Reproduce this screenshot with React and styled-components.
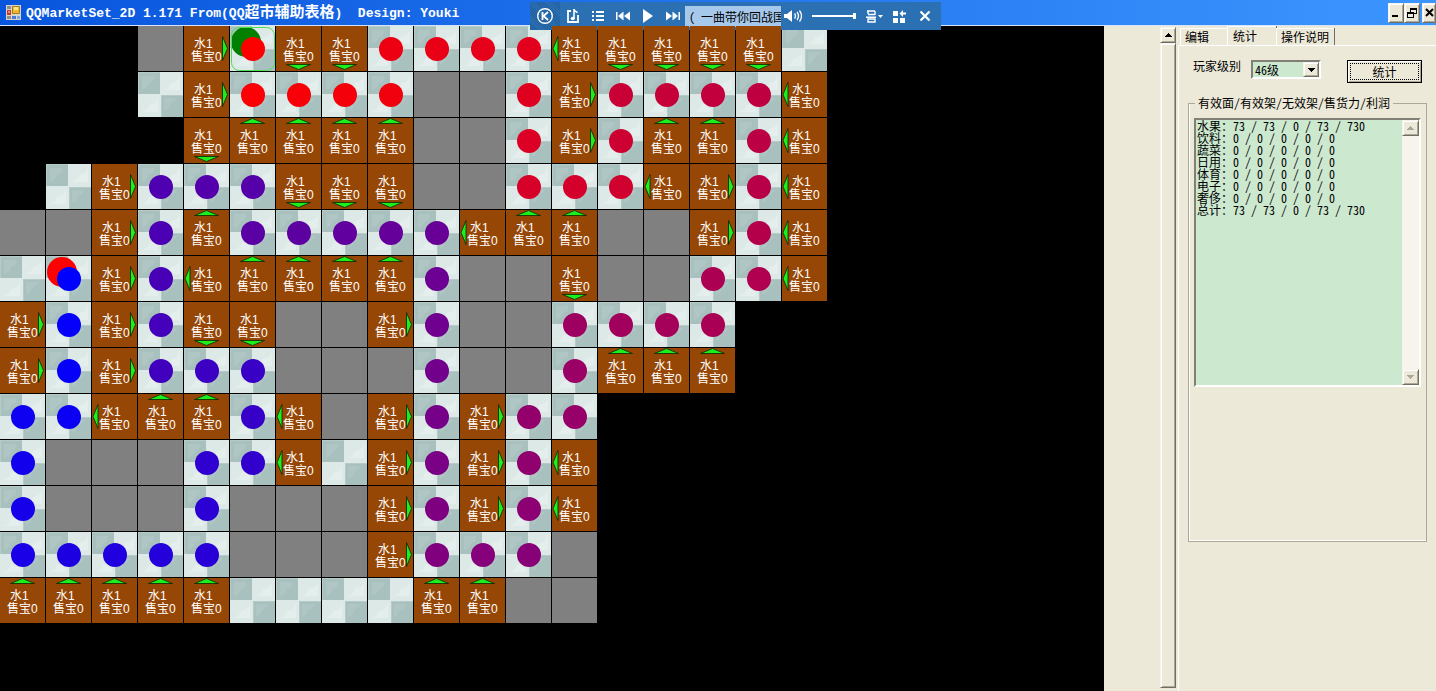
import { useState } from 'react';
import styled, { createGlobalStyle } from 'styled-components';

// One character per cell: . empty, g blocked, t floor, o path, s start, e end, L R U D shelf facing that side
const MAP = [
    '...gRsDDooooLDDDDt',
    '...tRooooggoRooooL',
    '....DUUUUggoRoUUoL',
    '.tRoooDDDggoooLRoL',
    'ggRoUoooooLUUggRoL',
    'teRoLUUUUoggDggooL',
    'RoRoDDggRoggoooo..',
    'RoRooogggoggoUUU..',
    'ooLUUoLgRoRoo.....',
    'ogggooLtRoRoL.....',
    'ogggogggRoRoL.....',
    'ooooogggRooog.....',
    'UUUUUttttUUgg.....',
];

// The walk from the entrance to the cash desk, as runs of steps
const ROUTE = 'D1 R3 U1 R3 D3 R2 U2 R3 D4 L1 D1 L3 D2 L1 D3 L2 U7 L4 U1 L2 D4 R2 D2 L1 D2 L4 U3 R1 U3';
const STEPS = { L: [-1, 0], R: [1, 0], U: [0, -1], D: [0, 1] };

function walkRoute() {
    const order = {};
    let x = 5;
    let y = 0;
    let n = 0;
    order[`${x},${y}`] = n;
    ROUTE.split(' ').forEach((run) => {
        const [dx, dy] = STEPS[run[0]];
        for (let i = 0; i < Number(run[1]); i++) {
            x += dx;
            y += dy;
            n += 1;
            order[`${x},${y}`] = n;
        }
    });
    return { order, last: n };
}

const { order, last } = walkRoute();

const dotColor = (x, y) => {
    const blue = Math.round((order[`${x},${y}`] / last) * 255);
    return `rgb(${255 - blue}, 0, ${blue})`;
};

const ARROWS = {
    R: '38.5,10.5 43.5,22.5 38.5,34.5',
    L: '6,10.5 1,22.5 6,34.5',
    U: '10.5,5.5 22.5,0.5 34.5,5.5',
    D: '10.5,38.5 22.5,43.5 34.5,38.5',
};

const ROWS = [
    ['水果', '73 / 73 / 0 / 73 / 730'],
    ['饮料', '0 / 0 / 0 / 0 / 0'],
    ['蔬菜', '0 / 0 / 0 / 0 / 0'],
    ['日用', '0 / 0 / 0 / 0 / 0'],
    ['体育', '0 / 0 / 0 / 0 / 0'],
    ['电子', '0 / 0 / 0 / 0 / 0'],
    ['奢侈', '0 / 0 / 0 / 0 / 0'],
    ['总计', '73 / 73 / 0 / 73 / 730'],
];

function FloorArt({ children }) {
    return (
        <TileArt viewBox="0 0 45 45" aria-hidden="true">
            <path d="M0 0h45v45H0z" fill="#dde9e7" />
            <path d="M0 0h22v22H0zM23 23h22v22H23z" fill="#a8c0be" />
            <path d="M0 0h22v1H1v21H0zM23 23h22v1H24v21h-1z" fill="#b6cac8" />
            <path d="M4 4h12q1 6-5 7-1 5-7 7zM26 26h13q-2 4-7 6-1 5-6 7z" fill="#b0c6c4" />
            <path d="M26 18q6-2 7-7 7-1 9-7v14zM4 40q6-2 7-7 7-1 9-7v14z" fill="#e4eeec" />
            {children}
        </TileArt>
    );
}

function Cell({ kind, x, y }) {
    if (kind === '.') return <Empty />;
    if (kind === 'g') return <Blocked />;
    if (kind === 't') return <FloorArt />;
    if (kind === 'o' || kind === 's' || kind === 'e') {
        return (
            <FloorArt>
                {kind === 's' && <circle cx="16" cy="16" r="15" fill="#008000" />}
                {kind === 'e' && <circle cx="16" cy="16" r="15" fill="#ff0000" />}
                <circle cx="23" cy="23" r="12" fill={dotColor(x, y)} />
                {kind === 's' && <rect x="1.5" y="1.5" width="43" height="43" rx="8" fill="none" stroke="#4fe052" />}
            </FloorArt>
        );
    }
    return (
        <Shelf>
            <ShelfText>水1</ShelfText>
            <ShelfText>售宝0</ShelfText>
            <ShelfArrow viewBox="0 0 45 45" aria-hidden="true">
                <polygon points={ARROWS[kind]} fill="#1cf01c" stroke="#0a2400" strokeWidth="0.8" strokeMiterlimit="10" />
            </ShelfArrow>
        </Shelf>
    );
}

function AppIcon() {
    return (
        <svg width="15" height="15" viewBox="0 0 15 15" aria-hidden="true">
            <path d="M0 0h15v15H0z" fill="#d9d5c8" />
            <path d="M1 1h4v3H1zM1 11h4v3H1z" fill="#8d8d95" />
            <path d="M1 5h4v5H1z" fill="#c4382c" />
            <path d="M2 6h2v2H2z" fill="#e88a78" />
            <path d="M6.5 1.5h7v7h-7z" fill="#f0b92c" stroke="#a87a20" />
            <path d="M8 2h4v3H8z" fill="#ffe58a" />
            <path d="M6 11h4v3H6z" fill="#4a78d8" />
            <path d="M11 11h3v3h-3z" fill="#7da4ea" />
        </svg>
    );
}

function Player() {
    return (
        <PlayerBar>
            <LogoButton aria-label="Player">
                <svg width="18" height="18" viewBox="0 0 18 18" fill="none" stroke="#fff">
                    <circle cx="9" cy="9" r="7.3" strokeWidth="1.4" />
                    <path d="M6.5 5v8M12 5L7.5 9l4.5 4" strokeWidth="1.8" />
                </svg>
            </LogoButton>
            <PlayerButton aria-label="Library">
                <svg width="14" height="16" viewBox="0 0 14 16" fill="none" stroke="#fff" strokeWidth="1.8">
                    <path d="M5 3H2v11h10V7" />
                    <path d="M8 11V1q0 2 3.5 3.5" strokeWidth="1.6" />
                    <ellipse cx="6.7" cy="10.5" rx="2" ry="1.7" fill="#fff" stroke="none" />
                </svg>
            </PlayerButton>
            <PlayerButton aria-label="Playlist">
                <svg width="14" height="12" viewBox="0 0 14 12" fill="#fff">
                    <path d="M1 1h2v2H1zM5 1h8v2H5zM1 5h2v2H1zM5 5h8v2H5zM1 9h2v2H1zM5 9h8v2H5z" />
                </svg>
            </PlayerButton>
            <PlayerButton aria-label="Previous">
                <svg width="16" height="10" viewBox="0 0 16 10" fill="#fff">
                    <path d="M1 1h1.5v8H1zM8.5 .5v9L3 5zM15 .5v9L9 5z" />
                </svg>
            </PlayerButton>
            <PlayerButton aria-label="Play">
                <svg width="12" height="16" viewBox="0 0 12 16" fill="#fff">
                    <path d="M1 1l10 7-10 7z" />
                </svg>
            </PlayerButton>
            <PlayerButton aria-label="Next">
                <svg width="16" height="10" viewBox="0 0 16 10" fill="#fff">
                    <path d="M13.5 1H15v8h-1.5zM1 .5v9L7 5zM7.5 .5v9L13 5z" />
                </svg>
            </PlayerButton>
            <Song>( 一曲带你回战国</Song>
            <PlayerButton aria-label="Mute">
                <svg width="19" height="14" viewBox="0 0 19 14" fill="none" stroke="#fff" strokeWidth="1.3">
                    <path d="M0 5h3l5-4v12L3 9H0z" fill="#fff" stroke="none" />
                    <path d="M10.5 4.5q2 2.5 0 5M13 3q3 4 0 8M15.5 1.5q4 5.5 0 11" />
                </svg>
            </PlayerButton>
            <Volume type="range" min="0" max="100" defaultValue="100" aria-label="Volume" />
            <PlayerButton aria-label="Lyrics">
                <svg width="18" height="13" viewBox="0 0 18 13" fill="none" stroke="#fff" strokeWidth="1.4">
                    <path d="M1 1h8M9 1v4M2 4.5h7M0 7.2h10M2 9h7v3H2zM2 1v3" />
                    <path d="M12 5h5l-2.5 3z" fill="#fff" stroke="none" />
                </svg>
            </PlayerButton>
            <PlayerButton aria-label="Mode">
                <svg width="14" height="13" viewBox="0 0 14 13" fill="#fff">
                    <path d="M0 1h5v5H0zM0 8h5v5H0zM7 8h5v5H7zM6.5 3.5L10 0v2.5h3v2h-3V7z" />
                </svg>
            </PlayerButton>
            <PlayerButton aria-label="Close player">
                <svg width="12" height="12" viewBox="0 0 12 12" stroke="#fff" strokeWidth="2.2">
                    <path d="M1.5 1.5l9 9M10.5 1.5l-9 9" />
                </svg>
            </PlayerButton>
        </PlayerBar>
    );
}

function Triangle({ up, color = '#000' }) {
    return (
        <svg width="7" height="4" viewBox="0 0 7 4" shapeRendering="crispEdges" aria-hidden="true">
            <path d={up ? 'M0 4L3.5 0 7 4z' : 'M0 0h7L3.5 4z'} fill={color} />
        </svg>
    );
}

function App() {
    const [level, setLevel] = useState('46');
    const report = ROWS.map(([name, values]) => `${name}：${values}`).join('\n');

    return (
        <Window>
            <GlobalStyle />
            <TitleBar>
                <AppIcon />
                <Title>QQMarketSet_2D 1.171 From(QQ<Han>超市辅助表格</Han>)  Design: Youki</Title>
                <WindowButtons>
                    <WindowButton aria-label="Minimize">
                        <svg width="10" height="10" viewBox="0 0 10 10"><path d="M1 7h6v2H1z" /></svg>
                    </WindowButton>
                    <WindowButton aria-label="Restore">
                        <svg width="10" height="10" viewBox="0 0 10 10" shapeRendering="crispEdges">
                            <path d="M3 0h7v6H7v4H0V4h3zM4 2v2h3v1h2V2zM1 6v3h5V6z" fillRule="evenodd" />
                        </svg>
                    </WindowButton>
                    <WindowButton aria-label="Close" $edge>
                        <svg width="9" height="9" viewBox="0 0 9 9" stroke="#000" strokeWidth="2">
                            <path d="M1 1l7 7M8 1L1 8" />
                        </svg>
                    </WindowButton>
                </WindowButtons>
            </TitleBar>
            <Player />

            <Body>
                <Canvas>
                    <Board>
                        {MAP.map((row, y) => row.split('').map((kind, x) => (
                            <Cell key={`${x}-${y}`} kind={kind} x={x} y={y} />
                        )))}
                    </Board>
                </Canvas>
                <PageScroll>
                    <ScrollButton aria-label="Scroll up"><Triangle up /></ScrollButton>
                    <ScrollThumb />
                </PageScroll>

                <Side>
                    <Tabs role="tablist">
                        <Tab role="tab">编辑</Tab>
                        <Tab role="tab" $active aria-selected="true">统计</Tab>
                        <Tab role="tab">操作说明</Tab>
                    </Tabs>
                    <Panel>
                        <LevelRow>
                            <label htmlFor="level">玩家级别</label>
                            <SelectBox>
                                <Select id="level" value={level} onChange={(e) => setLevel(e.target.value)}>
                                    <option value="45">45级</option>
                                    <option value="46">46级</option>
                                    <option value="47">47级</option>
                                </Select>
                                <SelectArrow><Triangle /></SelectArrow>
                            </SelectBox>
                            <CountButton>统计</CountButton>
                        </LevelRow>
                        <Group>
                            <Legend id="report-label">有效面/有效架/无效架/售货力/利润</Legend>
                            <ReportBox>
                                <Report aria-labelledby="report-label" readOnly value={report} />
                                <ReportScroll>
                                    <ScrollButton disabled aria-label="Report up"><Triangle up color="#aca899" /></ScrollButton>
                                    <ScrollButton disabled aria-label="Report down"><Triangle color="#aca899" /></ScrollButton>
                                </ReportScroll>
                            </ReportBox>
                        </Group>
                    </Panel>
                </Side>
            </Body>
        </Window>
    );
}

const GlobalStyle = createGlobalStyle`
* {
  box-sizing: border-box;
}

body {
  margin: 0;
  background: #ece9d8;
}

body, button, select, textarea {
  font-family: "Noto Sans CJK SC", sans-serif;
  font-size: 12px;
  font-feature-settings: "hwid" 1;
  color: #000;
}

button {
  padding: 0;
  border: 0;
}

svg {
  display: block;
  flex: none;
}
`;

const raised = `
  background: #ece9d8;
  border: 1px solid;
  border-color: #f6f4ea #716f64 #716f64 #f6f4ea;
  box-shadow: inset 1px 1px #fff, inset -1px -1px #aca899;
`;

const Window = styled.div`
  position: relative;
  display: flex;
  flex-direction: column;
  min-height: 100vh;
`;

const TitleBar = styled.header`
  display: flex;
  align-items: center;
  gap: 5px;
  height: 26px;
  padding-left: 6px;
  background: linear-gradient(90deg, #0855dd, #3c96ff);
  border-bottom: 1px solid #d6e4f8;
`;

const Title = styled.h1`
  margin: 0;
  white-space: pre;
  color: #fff;
  font: bold 13px/24px "Liberation Mono", monospace;
`;

const Han = styled.span`
  font: bold 15px/24px "Noto Sans CJK SC", sans-serif;
`;

const WindowButtons = styled.div`
  display: flex;
  margin-left: auto;
`;

const WindowButton = styled.button`
  ${raised}
  display: flex;
  align-items: center;
  justify-content: center;
  width: ${(p) => (p.$edge ? '14px' : '16px')};
  height: 20px;
  margin-left: ${(p) => (p.$edge ? '2px' : '0')};
`;

const PlayerBar = styled.div`
  position: absolute;
  top: 2px;
  left: 530px;
  display: flex;
  align-items: center;
  width: 411px;
  height: 28px;
  background: #2c70b4;
`;

const PlayerButton = styled.button`
  display: flex;
  align-items: center;
  justify-content: center;
  flex: none;
  width: 25px;
  height: 28px;
  background: transparent;
`;

const LogoButton = styled(PlayerButton)`
  width: 30px;
  background: repeating-linear-gradient(45deg, #22609f 0 1px, #2c70b4 1px 2px);
`;

const Song = styled.span`
  flex: none;
  width: 96px;
  padding-left: 4px;
  overflow: hidden;
  white-space: nowrap;
  line-height: 21px;
  background: #a6c8ea;
`;

const Volume = styled.input`
  appearance: none;
  flex: none;
  width: 44px;
  height: 12px;
  margin: 0 6px;
  background: linear-gradient(#fff, #fff) center / 100% 2px no-repeat;

  &::-webkit-slider-thumb {
    appearance: none;
    width: 3px;
    height: 6px;
    background: #fff;
  }
`;

const Body = styled.main`
  display: flex;
  flex: 1;
`;

const Canvas = styled.section`
  flex: 1;
  min-width: 0;
  overflow: hidden;
  background: #000;
`;

const Board = styled.div`
  display: grid;
  grid-template-columns: repeat(18, 45px);
  grid-auto-rows: 45px;
  gap: 1px;
`;

const Empty = styled.div``;

const Blocked = styled.div`
  background: #808080;
`;

const TileArt = styled.svg`
  width: 45px;
  height: 45px;
`;

const Shelf = styled.div`
  position: relative;
  display: flex;
  flex-direction: column;
  padding: 12px 0 0 7px;
  background: #964605;
`;

const ShelfText = styled.span`
  color: #fff;
  font-family: "Liberation Sans", "Noto Sans CJK SC", sans-serif;
  line-height: 13px;
  white-space: nowrap;

  &:first-child {
    padding-left: 3px;
  }
`;

const ShelfArrow = styled.svg`
  position: absolute;
  inset: 0;
`;

const PageScroll = styled.div`
  display: flex;
  flex-direction: column;
  width: 72px;
  padding: 1px 0 3px 56px;
`;

const ScrollButton = styled.button`
  ${raised}
  display: flex;
  align-items: center;
  justify-content: center;
  width: 100%;
  height: 16px;
`;

const ScrollThumb = styled.div`
  ${raised}
  flex: 1;
`;

const Side = styled.aside`
  display: flex;
  flex-direction: column;
  width: 260px;
  padding-left: 2px;
`;

const Tabs = styled.div`
  display: flex;
  align-items: flex-end;
  height: 19px;
  padding-left: 2px;
`;

const Tab = styled.button`
  height: ${(p) => (p.$active ? '19px' : '17px')};
  padding: ${(p) => (p.$active ? '0 19px 0 5px' : '0 5px 0 4px')};
  line-height: 16px;
  background: #ece9d8;
  border: solid #fff;
  border-width: 1px 0 0 1px;
  box-shadow: 1px 0 #716f64;

  &:first-child {
    padding-right: 18px;
    box-shadow: none;
  }
`;

const Panel = styled.div`
  flex: 1;
  padding: 14px 9px 0 9px;
  border: solid #fff;
  border-width: 1px 0 0 1px;
`;

const LevelRow = styled.div`
  display: flex;
  align-items: flex-start;
  gap: 10px;
  padding: 0 5px 0 5px;
  line-height: 12px;
`;

const SelectBox = styled.div`
  position: relative;
  width: 70px;
  height: 19px;
`;

const Select = styled.select`
  appearance: none;
  width: 100%;
  height: 19px;
  padding: 0 0 0 2px;
  line-height: 14px;
  background: #cce8cf;
  border: 2px solid;
  border-color: #808076 #fff #fff #808076;
  border-radius: 0;
`;

const SelectArrow = styled.span`
  ${raised}
  position: absolute;
  top: 2px;
  right: 2px;
  display: flex;
  align-items: center;
  justify-content: center;
  width: 16px;
  height: 15px;
  pointer-events: none;
`;

const CountButton = styled.button`
  ${raised}
  width: 75px;
  height: 23px;
  margin-left: auto;
  outline: 1px dotted #000;
  outline-offset: -4px;
  border-color: #000;
`;

const Group = styled.fieldset`
  min-width: 0;
  height: 446px;
  margin: 13px 0 0;
  padding: 8px 5px 0;
  border: 1px solid #aca899;
  box-shadow: inset 1px 0 #fff, inset 0 -1px #fff;
`;

const Legend = styled.legend`
  margin-left: 1px;
  padding: 0 3px;
  line-height: 14px;
`;

const ReportBox = styled.div`
  display: flex;
  height: 269px;
  border: 2px solid;
  border-color: #808076 #fff #fff #808076;
`;

const Report = styled.textarea`
  flex: 1;
  min-width: 0;
  padding: 0 0 0 1px;
  border: 0;
  resize: none;
  overflow: hidden;
  line-height: 12px;
  background: #cce8cf;
`;

const ReportScroll = styled.div`
  display: flex;
  flex-direction: column;
  justify-content: space-between;
  width: 17px;
  background: #f6f4ec;
`;

export default App;
